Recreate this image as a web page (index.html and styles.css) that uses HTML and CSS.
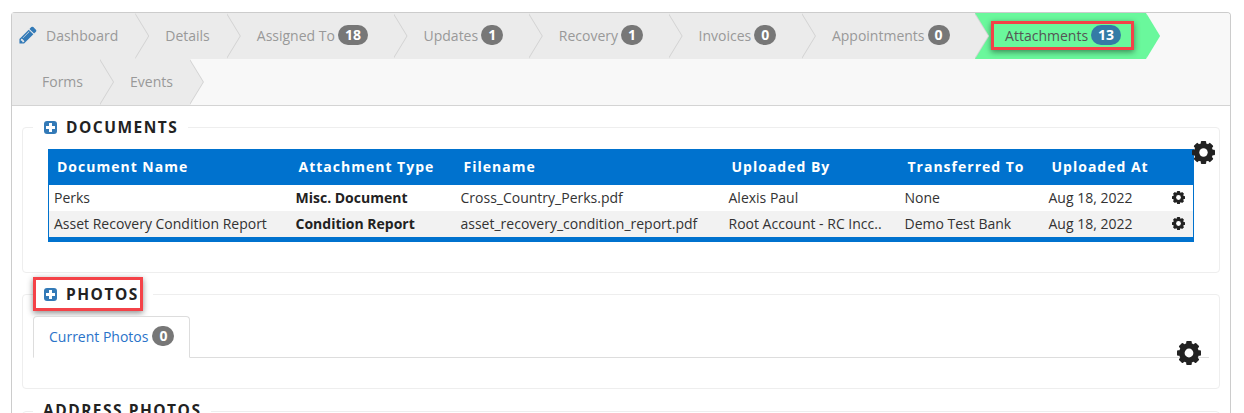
FILE: index.html
```html
<!DOCTYPE html>
<html lang="en">
<head>
  <meta charset="UTF-8" />
  <meta name="viewport" content="width=device-width, initial-scale=1" />
  <title>Attachments</title>
  <link rel="stylesheet" href="styles.css">
</head>
<body>

<svg class="defs" width="0" height="0">
  <symbol id="cog" viewBox="0 0 24 24">
    <g fill="#222">
      <rect x="9.2" y="0" width="5.6" height="24" rx="1"/>
      <rect x="9.2" y="0" width="5.6" height="24" rx="1" transform="rotate(45 12 12)"/>
      <rect x="9.2" y="0" width="5.6" height="24" rx="1" transform="rotate(90 12 12)"/>
      <rect x="9.2" y="0" width="5.6" height="24" rx="1" transform="rotate(135 12 12)"/>
    </g>
    <circle cx="12" cy="12" r="7.2" fill="none" stroke="#222" stroke-width="5.6"/>
    <circle cx="12" cy="12" r="4.4" fill="#fff"/>
  </symbol>
</svg>

<div class="panel">
  <nav class="crumbs">
    <a class="crumb crumb-first">
      <svg class="pencil" viewBox="0 0 1792 1792"><path fill="#337ab7" d="M491 1536l91-91-235-235-91 91v107h128v128h107zm523-928q0-22-22-22-10 0-17 7l-542 542q-7 7-7 17 0 22 22 22 10 0 17-7l542-542q7-7 7-17zm-54-192l416 416-832 832h-416v-416zm683 96q0 53-37 90l-166 166-416-416 166-165q36-38 90-38 53 0 91 38l235 234q37 39 37 91z"/></svg>
      Dashboard
    </a>
    <a class="crumb">Details</a>
    <a class="crumb has-badge">Assigned To <span class="badge">18</span></a>
    <a class="crumb has-badge">Updates <span class="badge">1</span></a>
    <a class="crumb has-badge">Recovery <span class="badge">1</span></a>
    <a class="crumb has-badge">Invoices <span class="badge">0</span></a>
    <a class="crumb has-badge">Appointments <span class="badge">0</span></a>
    <a class="crumb crumb-active">
      <span class="mark mark-crumb">Attachments <span class="badge badge-blue">13</span></span>
    </a>
    <a class="crumb">Forms</a>
    <a class="crumb">Events</a>
  </nav>

  <fieldset class="box box-docs">
    <legend><span class="plus"></span>DOCUMENTS</legend>
    <svg class="cog cog-big"><use href="#cog"/></svg>
    <table class="docs">
      <colgroup>
        <col class="c1"><col class="c2"><col class="c3"><col class="c4"><col class="c5"><col class="c6"><col>
      </colgroup>
      <thead>
        <tr>
          <th>Document Name</th>
          <th>Attachment Type</th>
          <th>Filename</th>
          <th>Uploaded By</th>
          <th>Transferred To</th>
          <th>Uploaded At</th>
          <th></th>
        </tr>
      </thead>
      <tbody>
        <tr>
          <td>Perks</td>
          <td><b>Misc. Document</b></td>
          <td>Cross_Country_Perks.pdf</td>
          <td>Alexis Paul</td>
          <td>None</td>
          <td>Aug 18, 2022</td>
          <td class="act"><svg class="cog cog-small"><use href="#cog"/></svg></td>
        </tr>
        <tr>
          <td>Asset Recovery Condition Report</td>
          <td><b>Condition Report</b></td>
          <td>asset_recovery_condition_report.pdf</td>
          <td>Root Account - RC Incc..</td>
          <td>Demo Test Bank</td>
          <td>Aug 18, 2022</td>
          <td class="act"><svg class="cog cog-small"><use href="#cog"/></svg></td>
        </tr>
      </tbody>
    </table>
  </fieldset>

  <fieldset class="box box-photos">
    <legend><span class="mark mark-legend"><span class="plus"></span>PHOTOS</span></legend>
    <svg class="cog cog-photos"><use href="#cog"/></svg>
    <div class="tabs">
      <a class="tab">Current Photos <span class="badge">0</span></a>
    </div>
  </fieldset>

  <fieldset class="box box-address">
    <legend>ADDRESS PHOTOS</legend>
  </fieldset>
</div>

</body>
</html>
```

FILE: styles.css
```css
html, body {
  height: 413px;
  overflow: hidden;
}
body {
  margin: 0;
  padding: 12px 13px 0 11px;
  box-sizing: border-box;
  background: #fff;
  color: #333;
  font-family: "Open Sans", "Liberation Sans", sans-serif;
  font-size: 14px;
}
.defs {
  position: absolute;
}
.panel {
  border: 1px solid #ccc;
  border-bottom: none;
  border-radius: 4px 4px 0 0;
}

/* breadcrumb arrows */
.crumbs {
  display: flex;
  flex-wrap: wrap;
  background: #f8f8f8;
  border-bottom: 1px solid #d4d4d4;
  border-radius: 3px 3px 0 0;
}
.crumb {
  position: relative;
  display: flex;
  align-items: center;
  gap: 3px;
  height: 46px;
  box-sizing: border-box;
  padding: 0 17px 2px 30px;
  background: #ebebeb;
  color: #999;
  white-space: nowrap;
}
.crumb::before,
.crumb::after {
  content: "";
  position: absolute;
  top: 0;
  width: 14px;
  height: 100%;
  z-index: 1;
  clip-path: polygon(0 0, 100% 50%, 0 100%);
}
.crumb::before {
  left: 100%;
  background: #d2d2d2;
}
.crumb::after {
  left: calc(100% - 1px);
  background: inherit;
}
.crumb-first {
  padding-left: 6px;
  gap: 8px;
}
.has-badge {
  padding-right: 25.6px;
}
.crumb-active {
  background: #6af89c;
  padding: 0 12px 2px 16px;
  color: #555;
}
.crumb-active::before {
  background: #6af89c;
}
.pencil {
  width: 20px;
  height: 20px;
}

.badge {
  display: inline-block;
  min-width: 8px;
  padding: 0 7px;
  border-radius: 10px;
  background: #777;
  color: #fff;
  font-size: 14px;
  font-weight: 700;
  line-height: 20px;
  text-align: center;
}
.badge-blue {
  background: #347ba6;
}

/* red callouts */
.mark {
  border: 3px solid #f44248;
  box-shadow: 0 2px 6px rgba(0, 0, 0, 0.45);
  box-sizing: border-box;
}
.mark-crumb {
  display: flex;
  align-items: center;
  gap: 3px;
  height: 29px;
  padding: 0 10px 0 11px;
  white-space: nowrap;
}
.mark-legend {
  display: inline-flex;
  align-items: center;
  width: 110px;
  height: 34px;
  margin: -6px 0 -6px -10px;
  padding-left: 7px;
}

/* fieldsets */
.box {
  position: relative;
  min-width: 0;
  margin: 10px 10px 0;
  border: 1px solid #eee;
  border-radius: 4px;
}
.box legend {
  display: flex;
  align-items: center;
  height: 22px;
  padding: 0 10px;
  color: #222;
  font-size: 15.5px;
  font-weight: 700;
  letter-spacing: 1.5px;
  line-height: 22px;
}
.plus {
  position: relative;
  display: inline-block;
  flex: none;
  width: 13px;
  height: 13px;
  margin: 0 9px 0 1px;
  border-radius: 3px;
  background: #337ab7;
}
.plus::before,
.plus::after {
  content: "";
  position: absolute;
  background: #fff;
}
.plus::before {
  left: 2px;
  top: 5px;
  width: 9px;
  height: 3px;
}
.plus::after {
  left: 5px;
  top: 2px;
  width: 3px;
  height: 9px;
}
.box-docs {
  padding: 11px 25px 30px;
}
.box-docs legend {
  margin-left: -15px;
}
.box-photos {
  padding: 11px 10px 30px;
}
.box-address {
  height: 14px;
  padding: 0;
}
.box-address legend {
  margin-left: 10px;
  padding-bottom: 2px;
}

.cog {
  display: block;
}
.cog-big,
.cog-photos {
  position: absolute;
}
.cog-big {
  width: 23px;
  height: 23px;
  right: 4px;
  top: 3px;
}
.cog-photos {
  width: 24px;
  height: 24px;
  right: 18px;
  top: 36px;
}
.cog-small {
  width: 13px;
  height: 13px;
  margin-left: auto;
}

/* documents table */
.docs {
  width: 100%;
  table-layout: fixed;
  border-collapse: collapse;
  border-left: 1px solid #0072ce;
  border-right: 1px solid #0072ce;
  border-bottom: 5px solid #0072ce;
}
.c1 { width: 242px; }
.c2 { width: 165px; }
.c3 { width: 268px; }
.c4 { width: 176px; }
.c5 { width: 144px; }
.c6 { width: 116px; }
.docs th {
  height: 34px;
  padding: 0 8px 2px;
  background: #0072ce;
  color: #fff;
  font-weight: 700;
  letter-spacing: 1px;
  text-align: left;
  white-space: nowrap;
}
.docs td {
  height: 24px;
  padding: 0 5px 2px;
  white-space: nowrap;
}
.docs td b {
  color: #222;
}
.docs tbody tr:nth-child(even) {
  background: #f2f2f2;
}
.docs .act {
  padding-right: 8px;
}

/* tabs */
.tabs {
  display: flex;
  border-bottom: 1px solid #ddd;
}
.tab {
  margin-bottom: -1px;
  padding: 0 15px 2px;
  height: 38px;
  display: flex;
  align-items: center;
  gap: 4px;
  border: 1px solid #ddd;
  border-bottom-color: #fff;
  border-radius: 4px 4px 0 0;
  background: #fff;
  color: #2a73c9;
  white-space: nowrap;
}
```
